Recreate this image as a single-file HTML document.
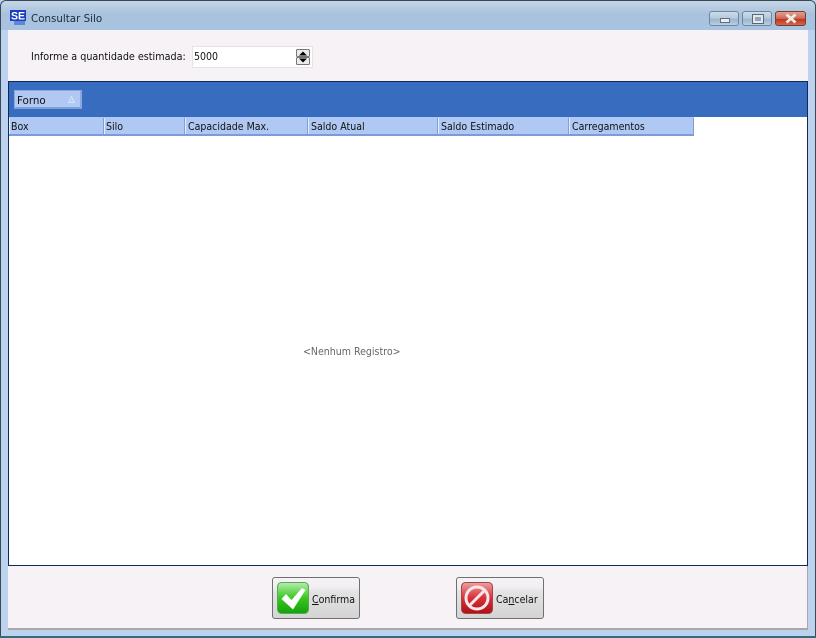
<!DOCTYPE html>
<html><head><meta charset="utf-8"><style>
html,body{margin:0;padding:0;background:#fff}
#w{position:relative;width:816px;height:638px;overflow:hidden;background:#bcd2ee;font-family:"DejaVu Sans","Liberation Sans",sans-serif;font-size:10px;color:#111}
#w div{position:absolute}
.t{white-space:nowrap;line-height:12px}
.s{font-size:10.5px;transform:scaleX(.9);transform-origin:0 0}
.hc{top:118px;height:16px;border-left:1px solid #e4eefc;border-right:1px solid #7f9fd0;box-sizing:border-box}
.wb{top:11px;height:15px;box-sizing:border-box;border:1px solid #6d87a3;border-radius:3px;background:linear-gradient(#ccdbe9,#b4c8dc 50%,#9bb3cc 55%,#bccfe2)}
.btn{top:577px;width:88px;height:42px;box-sizing:border-box;border:1px solid #707070;border-radius:3px;background:linear-gradient(#f5f3f5 0,#f1eff1 22%,#e4e3e4 35%,#d4d4d4 100%)}
</style></head><body><div id="w">
<div style="left:0;top:0;width:816px;height:638px;box-sizing:border-box;border:1px solid #3a4a55;border-radius:6px 6px 0 0;background:#bcd2ee"></div>
<div style="left:1px;top:1px;width:814px;height:29px;border-radius:5px 5px 0 0;background:linear-gradient(#c5d6e8 0,#a9c2dc 45%,#a8c4e2 100%)"></div>
<div style="left:1px;top:30px;width:7px;height:606px;background:#bcd2ee"></div>
<div style="left:808px;top:30px;width:7px;height:606px;background:#bcd2ee"></div>
<div style="left:0;top:636px;width:816px;height:2px;background:#2e6f80"></div>

<svg style="position:absolute;left:10px;top:10px" width="17" height="16" viewBox="0 0 17 16">
<rect x="0" y="0" width="16" height="11" fill="#1c3fc0"/>
<text x="1" y="9.5" font-family="Liberation Sans, sans-serif" font-weight="700" font-size="11" fill="#fff" textLength="14" lengthAdjust="spacingAndGlyphs">SE</text>
<rect x="4" y="11" width="11" height="4" fill="#5f86d8"/>
</svg>
<div class="t" style="left:31px;top:13px;font-size:10.3px;color:#1c2a38">Consultar Silo</div>

<div class="wb" style="left:709px;width:30px"></div>
<div style="left:720px;top:18px;width:8px;height:3px;background:#eceef0;border:1px solid #5a6e84"></div>
<div class="wb" style="left:742px;width:30px"></div>
<div style="left:753px;top:15px;width:10px;height:8px;box-sizing:border-box;border:2px solid #e6e8ea;outline:1px solid #55687c;background:#8ea6be"></div>
<div class="wb" style="left:775px;width:31px;border-color:#7a3b30;background:linear-gradient(#e0a090,#cf6a55 50%,#b8371f 55%,#d8664c)"></div>
<svg style="position:absolute;left:784px;top:13px" width="14" height="11" viewBox="0 0 14 11"><path d="M2.5 1.5L11.5 9.5M11.5 1.5L2.5 9.5" stroke="#f2ece8" stroke-width="2.8"/></svg>

<div style="left:8px;top:30px;width:800px;height:51px;background:#f6f2f6"></div>
<div class="t s" style="left:31px;top:51px;transform:scaleX(.915)">Informe a quantidade estimada:</div>
<div style="left:192px;top:46px;width:121px;height:22px;box-sizing:border-box;background:#fff;border:1px solid #e6e2e6"></div>
<div class="t s" style="left:194px;top:51px">5000</div>
<svg style="position:absolute;left:296px;top:49px" width="14" height="16" viewBox="0 0 14 16">
<rect x="0.5" y="0.5" width="13" height="7" rx="1" fill="#ececec" stroke="#777"/>
<rect x="0.5" y="8.5" width="13" height="7" rx="1" fill="#ececec" stroke="#777"/>
<path d="M7 2.5L11 6.5H3Z" fill="#000"/><path d="M3 9.5H11L7 13.5Z" fill="#000"/></svg>

<div style="left:8px;top:81px;width:800px;height:485px;box-sizing:border-box;border:1px solid #0f2a5a;background:#fff"></div>
<div style="left:9px;top:82px;width:798px;height:35px;background:#376cbe"></div>
<div style="left:14px;top:90px;width:68px;height:19px;box-sizing:border-box;background:#b0c8f2;border:1px solid #8aa8dc;border-bottom:2px solid #7f9fd8;border-right:2px solid #8aa8dc"></div>
<div class="t" style="left:17px;top:95px;font-size:10.3px">Forno</div>
<svg style="position:absolute;left:67px;top:95px" width="9" height="9" viewBox="0 0 9 9"><path d="M4.5 1.5L7.5 7.5H1.5Z" fill="#b8cdf3" stroke="#dfe9fb" stroke-width=".8"/></svg>

<div style="left:9px;top:117px;width:685px;height:19px;background:#b0c8f4;border-bottom:2px solid #7d9cd6;box-sizing:border-box"></div>
<div class="hc" style="left:9px;width:95px"></div>
<div class="hc" style="left:104px;width:81px"></div>
<div class="hc" style="left:185px;width:123px"></div>
<div class="hc" style="left:308px;width:130px"></div>
<div class="hc" style="left:438px;width:131px"></div>
<div class="hc" style="left:569px;width:125px"></div>
<div class="t s" style="left:11px;top:121px">Box</div>
<div class="t s" style="left:106px;top:121px">Silo</div>
<div class="t s" style="left:188px;top:121px">Capacidade Max.</div>
<div class="t s" style="left:311px;top:121px">Saldo Atual</div>
<div class="t s" style="left:441px;top:121px">Saldo Estimado</div>
<div class="t s" style="left:572px;top:121px">Carregamentos</div>
<div class="t s" style="left:303px;top:346px;color:#666">&lt;Nenhum Registro&gt;</div>

<div style="left:8px;top:566px;width:800px;height:64px;background:#f6f2f6;border-right:1px solid #a8a8a8;border-bottom:2px solid #a8a8a8;box-sizing:border-box"></div>

<div class="btn" style="left:272px"></div>
<svg style="position:absolute;left:277px;top:582px" width="32" height="32" viewBox="0 0 32 32">
<defs><linearGradient id="g" x1="0" y1="0" x2="0" y2="1"><stop offset="0" stop-color="#b8ecb0"/><stop offset=".5" stop-color="#38c820"/><stop offset="1" stop-color="#14a00c"/></linearGradient></defs>
<rect x=".5" y=".5" width="31" height="31" rx="4" fill="url(#g)" stroke="#5aa85a"/>
<path d="M4.5 17L9 12L14.5 18L25 6L28.5 8L16 27.5Z" fill="#fff"/></svg>
<div class="t s" style="left:312px;top:594px"><u>C</u>onfirma</div>

<div class="btn" style="left:456px"></div>
<svg style="position:absolute;left:461px;top:582px" width="32" height="32" viewBox="0 0 32 32">
<defs><linearGradient id="r" x1="0" y1="0" x2="0" y2="1"><stop offset="0" stop-color="#eea0a0"/><stop offset=".5" stop-color="#d83038"/><stop offset="1" stop-color="#b01018"/></linearGradient></defs>
<rect x=".5" y=".5" width="31" height="31" rx="4" fill="url(#r)" stroke="#a04848"/>
<circle cx="16" cy="16" r="11" fill="none" stroke="#f6e8e8" stroke-width="3"/>
<path d="M8.5 23.5L23.5 8.5" stroke="#f6e8e8" stroke-width="3"/></svg>
<div class="t s" style="left:496px;top:594px">Ca<u>n</u>celar</div>
</div></body></html>
